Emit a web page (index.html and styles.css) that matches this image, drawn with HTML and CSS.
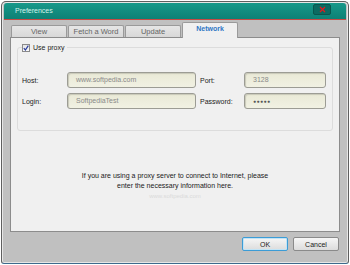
FILE: index.html
```html
<!DOCTYPE html>
<html>
<head>
    <meta charset="utf-8"/>
    <link rel="stylesheet" href="styles.css">
</head>
<body>
<div class="window">
    <div class="titlebar">
        <span class="title">Preferences</span>
        <span class="close">
            <svg width="7" height="7" viewBox="0 0 7 7"><path d="M1 1L6 6M6 1L1 6" stroke="#e3191d" stroke-width="1.3"/></svg>
        </span>
    </div>
    <div class="client">
        <div class="tabs">
            <div class="tab">View</div>
            <div class="tab">Fetch a Word</div>
            <div class="tab">Update</div>
            <div class="tab active">Network</div>
        </div>
        <div class="panel">
            <fieldset class="proxy">
                <legend>
                    <span class="check">
                        <svg width="6" height="6" viewBox="0 0 6 6"><path d="M0.8 3.2L2.4 5L5.3 0.6" fill="none" stroke="#2a3c9c" stroke-width="1.2"/></svg>
                    </span>
                    Use proxy
                </legend>
                <div class="fields">
                    <span class="label">Host:</span>
                    <div class="input">www.softpedia.com</div>
                    <span class="label second">Port:</span>
                    <div class="input">3128</div>
                    <span class="label">Login:</span>
                    <div class="input">SoftpediaTest</div>
                    <span class="label second">Password:</span>
                    <div class="input dots">●●●●●</div>
                </div>
            </fieldset>
            <p class="info">If you are using a proxy server to connect to Internet, please<br/>enter the necessary information here.</p>
            <p class="watermark">www.softpedia.com</p>
        </div>
        <div class="buttons">
            <button class="btn default">OK</button>
            <button class="btn">Cancel</button>
        </div>
    </div>
</div>
</body>
</html>
```
FILE: styles.css
```css
* {
    box-sizing: border-box;
}

body {
    margin: 0;
    padding: 1px 1px 0 1px;
    background: #fff;
    font-family: 'Liberation Sans', Arial, sans-serif;
    font-size: 7px;
    color: #222;
}

.window {
    height: 263px;
    border: 1px solid #5f5f5f;
    border-bottom-color: #3d6a8c;
    border-radius: 5px 5px 3px 3px;
    padding: 1px 2px 0 2px;
    background: #c0c0c0;
    box-shadow: inset 0 0 0 1px #e6e6e6;
}

.titlebar {
    display: flex;
    justify-content: space-between;
    height: 17px;
    border-bottom: 1px solid #c84a44;
    background: linear-gradient(#17998a, #0e8175);
    border-radius: 3px 3px 0 0;
}

.titlebar .title {
    padding: 4px 0 0 11px;
    color: #d4f2ea;
    font-size: 7px;
}

.titlebar .close {
    display: flex;
    align-items: center;
    justify-content: center;
    width: 18px;
    height: 11px;
    margin: 1px 15px 0 0;
    background: #0b6a61;
    border: 1px solid #09564e;
    border-radius: 2px;
}

.client {
    padding: 2px 6px 0 6px;
}

.tabs {
    display: flex;
    align-items: flex-end;
    gap: 1px;
    height: 15px;
    padding-left: 1px;
}

.tab {
    width: 56px;
    height: 12px;
    border: 1px solid #9a9a9a;
    border-bottom: none;
    border-radius: 2px 2px 0 0;
    background: linear-gradient(#e6e6e6, #d8d8d8);
    color: #666;
    font-size: 7.5px;
    line-height: 11px;
    text-align: center;
}

.tab.active {
    height: 16px;
    margin-bottom: -1px;
    position: relative;
    background: #f0f0f0;
    color: #2f76c4;
    font-weight: bold;
    font-size: 7px;
    line-height: 12px;
}

.panel {
    height: 195px;
    border: 1px solid #8c8c8c;
    background: #f0f0f0;
    padding: 0 6px;
}

.proxy {
    margin: 5px 0 0 0;
    padding: 0 4px 21px 4px;
    border: 1px solid #dcdcdc;
    border-radius: 3px;
}

.proxy legend {
    display: flex;
    align-items: center;
    height: 9px;
    padding: 0 2px 0 0;
    color: #222;
}

.check {
    display: flex;
    align-items: center;
    justify-content: center;
    width: 8px;
    height: 8px;
    margin-right: 3px;
    border: 1px solid #8a8a8a;
    background: linear-gradient(#e4e4e4, #fafafa);
}

.fields {
    display: grid;
    grid-template-columns: 45px 129px 48px 82px;
    grid-auto-rows: 16px;
    row-gap: 5px;
    margin-top: 20px;
    align-items: center;
}

.label.second {
    padding-left: 4px;
}

.input {
    height: 16px;
    padding-left: 8px;
    line-height: 14px;
    border: 1px solid #9c9c94;
    border-radius: 3px;
    background: linear-gradient(#e9e9d6, #f1f1e3);
    box-shadow: inset 1px 1px 1px #c8c8b8;
    color: #8a8a8a;
}

.input.dots {
    color: #555;
    font-size: 5px;
    letter-spacing: 0.5px;
}

.info {
    margin: 40px 0 0 0;
    text-align: center;
    line-height: 10px;
    color: #1a1a1a;
}

.watermark {
    margin: 0;
    text-align: center;
    line-height: 10px;
    color: #dadada;
    font-size: 6px;
}

.buttons {
    display: flex;
    justify-content: flex-end;
    gap: 5px;
    margin-top: 5px;
    padding-right: 1px;
}

.btn {
    width: 46px;
    height: 14px;
    padding: 0;
    border: 1px solid #8a8a8a;
    border-radius: 2px;
    background: linear-gradient(#f6f6f6, #dcdcdc);
    font-family: 'Liberation Sans', Arial, sans-serif;
    font-size: 7px;
    color: #222;
}

.btn.default {
    border-color: #3c9cd6;
    box-shadow: inset 0 0 0 1px #c2e4f6;
}
```
